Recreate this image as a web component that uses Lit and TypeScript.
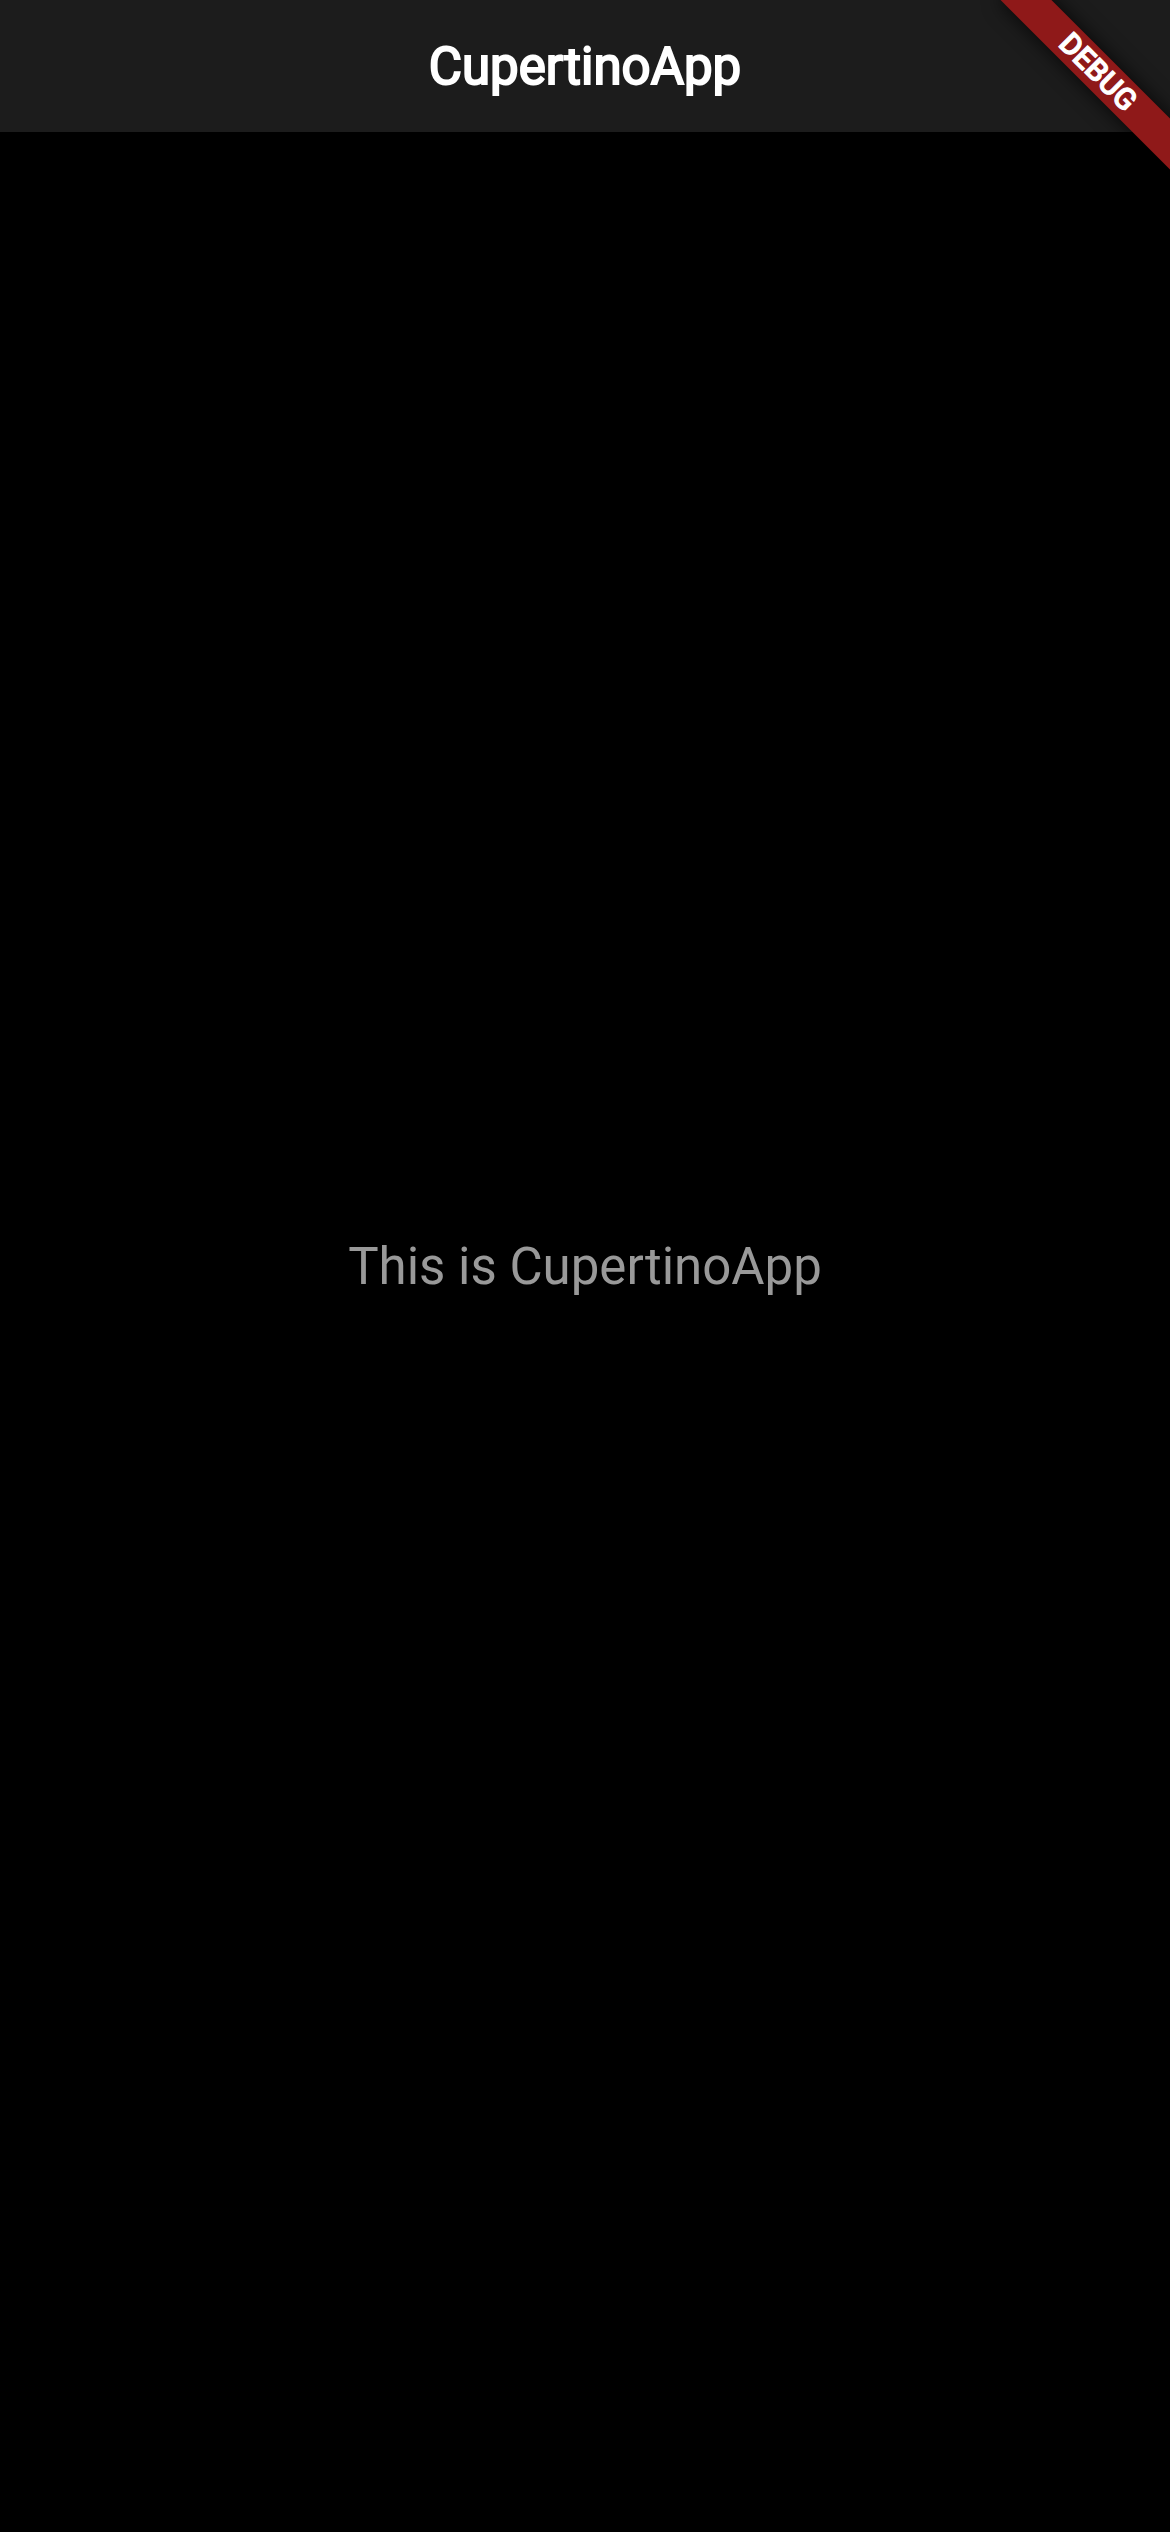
import { LitElement, html, css } from "lit";
import { customElement } from "lit/decorators.js";

@customElement("debug-banner")
export class DebugBanner extends LitElement {
  static styles = css`
    :host {
      position: absolute;
      top: 0;
      right: 0;
      width: 144px;
      height: 144px;
      display: flex;
      align-items: center;
      justify-content: center;
      pointer-events: none;
    }
    .ribbon {
      flex: none;
      width: 240px;
      line-height: 36px;
      transform: rotate(45deg);
      background: #8f1919;
      box-shadow: 0 0 20px rgba(0, 0, 0, 0.8);
      color: #fff;
      font-size: 30px;
      font-weight: 500;
      -webkit-text-stroke: 1px #fff;
      text-align: center;
    }
  `;

  render() {
    return html`<div class="ribbon">DEBUG</div>`;
  }
}

@customElement("app-root")
export class AppRoot extends LitElement {
  static styles = css`
    :host {
      position: relative;
      display: flex;
      flex-direction: column;
      min-height: 100vh;
      overflow: hidden;
      background: #000;
      font-family: Roboto, "Liberation Sans", sans-serif;
      font-size: 51px;
      line-height: 60px;
    }
    .nav-bar {
      padding: 37px 48px 35px;
      background: #1c1c1c;
      text-align: center;
    }
    .title {
      margin: 0;
      color: #fff;
      font-size: inherit;
      font-weight: 400;
      -webkit-text-stroke: 2px #fff;
    }
    .content {
      flex: 1;
      display: flex;
      align-items: center;
      justify-content: center;
      padding-bottom: 130px;
    }
    .message {
      margin: 0;
      color: #999;
    }
  `;

  render() {
    return html`
      <header class="nav-bar"><h1 class="title">CupertinoApp</h1></header>
      <main class="content"><p class="message">This is CupertinoApp</p></main>
      <debug-banner></debug-banner>
    `;
  }
}
